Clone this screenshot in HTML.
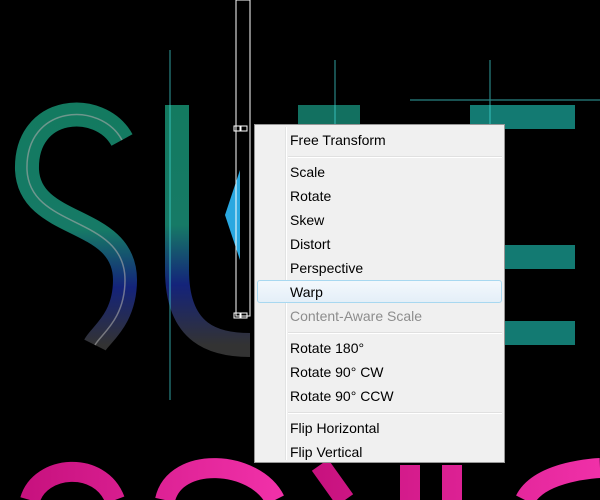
<!DOCTYPE html>
<html><head><style>
body{margin:0;width:600px;height:500px;background:#000;overflow:hidden;position:relative;font-family:"Liberation Sans",sans-serif}
svg{position:absolute;left:0;top:0}
.menu{position:absolute;left:254px;top:124px;width:251px;height:339px;background:#f0f0f0;border:1px solid #979797;box-sizing:border-box}
.gut{position:absolute;left:30px;top:2px;bottom:2px;width:1px;background:#e2e3e3;border-right:1px solid #fff}
.it{position:absolute;left:35px;font-size:14px;color:#000;height:24px;line-height:24px}
.sep{position:absolute;left:33px;right:2px;height:1px;background:#e0e0e0;border-bottom:1px solid #fff}
.hl{position:absolute;left:2px;right:2px;top:155px;height:23px;border:1px solid #a8d8f0;border-radius:3px;background:linear-gradient(#f3f8fc,#e4eff8);box-sizing:border-box}
</style></head><body>
<svg width="600" height="500">
<defs>
<linearGradient id="s" x1="0" y1="0" x2="0" y2="1"><stop offset="0" stop-color="#137a60"/><stop offset=".5" stop-color="#167a66"/><stop offset=".75" stop-color="#14237a"/><stop offset="1" stop-color="#333"/></linearGradient>
<linearGradient id="p" x1="0" y1="0" x2="1" y2="0"><stop offset="0" stop-color="#c8127f"/><stop offset="1" stop-color="#f030a8"/></linearGradient>
</defs>
<g fill="none" stroke-linecap="butt">
<path d="M122 140 C100 100 25 105 27 170 C30 230 125 215 125 280 C125 320 100 335 95 345" stroke="url(#s)" stroke-width="24"/>
<path d="M122 140 C100 100 25 105 27 170 C30 230 125 215 125 280 C125 320 100 335 95 345" stroke="#aaa" stroke-width="1.5" opacity=".6"/>
<path d="M177 105 V270 C177 335 215 345 250 345" stroke="url(#s)" stroke-width="24"/>
<path d="M310 105 V160 M310 117 H360" stroke="#127060" stroke-width="24"/>
<path d="M470 117 H575 M505 257 H575 M505 333 H575" stroke="#137a72" stroke-width="24"/>
<path d="M30 500 C40 465 100 460 115 500 M165 500 C175 455 255 460 275 500" stroke="url(#p)" stroke-width="20"/>
<path d="M320 465 L345 500 M410 465 V500 M452 465 V500 M525 500 C540 470 600 468 600 468" stroke="url(#p)" stroke-width="20"/>
</g>
<g stroke="#4dd" stroke-width="1.2" opacity=".6">
<line x1="170" y1="50" x2="170" y2="400"/><line x1="335" y1="60" x2="335" y2="250"/><line x1="490" y1="60" x2="490" y2="250"/><line x1="410" y1="100" x2="600" y2="100"/>
</g>
<polygon points="240,170 225,215 240,260" fill="#2aa8e0"/>
<rect x="236" y="0" width="14" height="316" fill="none" stroke="#fff" stroke-width="1"/>
<rect x="234" y="126" width="6" height="5" fill="none" stroke="#fff"/><rect x="241" y="126" width="6" height="5" fill="none" stroke="#fff"/>
<rect x="234" y="313" width="6" height="5" fill="none" stroke="#fff"/><rect x="241" y="313" width="6" height="5" fill="none" stroke="#fff"/>
</svg>
<div class="menu">
<div class="gut"></div>
<div class="hl"></div>
<div class="it" style="top:3px">Free Transform</div>
<div class="sep" style="top:31px"></div>
<div class="it" style="top:35px">Scale</div>
<div class="it" style="top:59px">Rotate</div>
<div class="it" style="top:83px">Skew</div>
<div class="it" style="top:107px">Distort</div>
<div class="it" style="top:131px">Perspective</div>
<div class="it" style="top:155px">Warp</div>
<div class="it" style="top:179px;color:#8d8d8d">Content-Aware Scale</div>
<div class="sep" style="top:207px"></div>
<div class="it" style="top:211px">Rotate 180°</div>
<div class="it" style="top:235px">Rotate 90° CW</div>
<div class="it" style="top:259px">Rotate 90° CCW</div>
<div class="sep" style="top:287px"></div>
<div class="it" style="top:291px">Flip Horizontal</div>
<div class="it" style="top:315px">Flip Vertical</div>
</div>
</body></html>
